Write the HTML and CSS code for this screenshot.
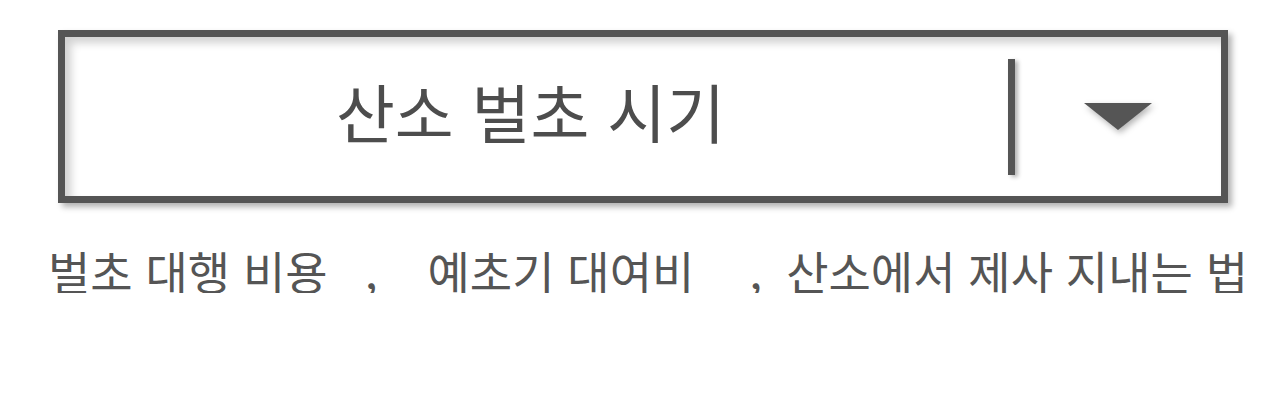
FILE: index.html
```html
<!DOCTYPE html>
<html lang="ko">
<head>
    <meta charset="utf-8">
    <title>산소 벌초 시기</title>
    <link rel="stylesheet" href="styles.css">
</head>
<body>
    <div class="select-box">
        <div class="select-label">산소 벌초 시기</div>
        <div class="select-divider"></div>
        <div class="select-toggle">
            <span class="caret"></span>
        </div>
    </div>

    <div class="related">
        <span class="related-item">벌초 대행 비용</span>
        <span class="related-sep">,</span>
        <span class="related-item">예초기 대여비</span>
        <span class="related-sep sep-tight">,</span>
        <span class="related-item">산소에서 제사 지내는 법</span>
    </div>
</body>
</html>
```

FILE: styles.css
```css
body {
    margin: 0;
    background: #fff;
    font-family: "Noto Sans CJK KR", "Noto Sans", sans-serif;
    color: #555;
}

/* dropdown box */
.select-box {
    display: flex;
    align-items: center;
    box-sizing: border-box;
    width: 1170px;
    height: 173px;
    margin: 30px 0 0 58px;
    border: 7px solid #555;
    background: #fff;
    box-shadow: 4px 4px 6px rgba(0, 0, 0, 0.3), inset 6px 6px 8px rgba(0, 0, 0, 0.18);
}

.select-label {
    flex: 1;
    text-align: center;
    font-size: 64px;
    line-height: 1;
    color: #4d4d4d;
    padding: 0 12px 14px 0;
}

.select-divider {
    width: 7px;
    height: 116px;
    background: #555;
    box-shadow: 3px 2px 4px rgba(0, 0, 0, 0.3);
}

.select-toggle {
    width: 206px;
    display: flex;
    justify-content: center;
    align-items: center;
}

.caret {
    width: 0;
    height: 0;
    border-left: 34px solid transparent;
    border-right: 34px solid transparent;
    border-top: 27px solid #555;
    filter: drop-shadow(2px 3px 3px rgba(0, 0, 0, 0.3));
}

/* related searches */
.related {
    display: flex;
    align-items: baseline;
    margin: 44px 0 0 48px;
    font-size: 46px;
    line-height: 1;
    color: #555;
    white-space: pre;
}

.related-sep {
    margin: 0 50px 0 37px;
}

.related-sep.sep-tight {
    margin: 0 24px 0 55px;
}
```
